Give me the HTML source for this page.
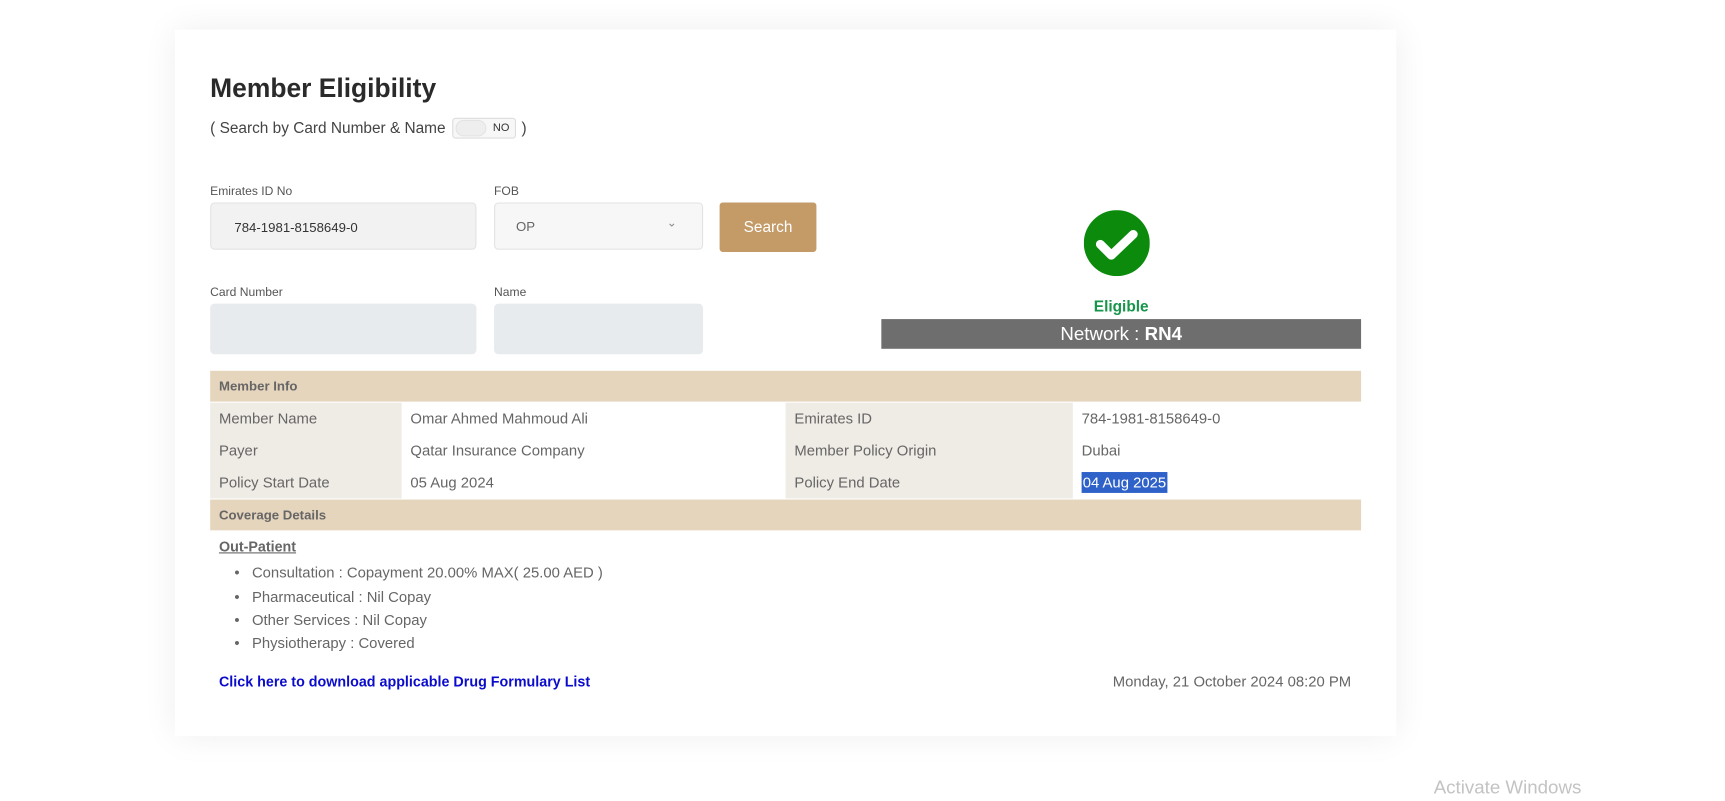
<!DOCTYPE html>
<html><head><meta charset="utf-8"><style>
html,body{margin:0;padding:0;width:1725px;height:801px;overflow:hidden;background:#fff;font-family:"Liberation Sans",Arial,sans-serif;}
#s{position:absolute;left:0;top:0;width:1560px;height:725px;transform:scale(1.1003);transform-origin:0 0;}
.a{position:absolute;white-space:nowrap}
.card{position:absolute;left:159px;top:27px;width:1110px;height:642px;background:#fff;box-shadow:0 0 30px rgba(0,0,0,0.07);}
.lbl{font-size:11px;color:#555}
.inp{position:absolute;height:43px;border:1px solid #e3e3e3;border-radius:4px;box-sizing:border-box}
.row{position:absolute;left:191px;width:1046px;height:29px;font-size:13.5px;color:#666}
.row div{position:absolute;top:0;height:29px;line-height:29px;padding-left:8px;box-sizing:border-box}
.g{background:#efebe5}
.hd{position:absolute;left:191px;width:1046px;height:28px;background:#e6d5bd;font-size:12px;font-weight:bold;color:#666;line-height:28px;padding-left:8px;box-sizing:border-box}
.li{font-size:13.5px;color:#666}
</style></head><body><div id="s">
<div class="card"></div>
<div class="a" style="left:191px;top:67px;font-size:24px;font-weight:bold;color:#2a2a2a">Member Eligibility</div>
<div class="a" style="left:191px;top:108px;font-size:14px;color:#444">( Search by Card Number &amp; Name</div>
<div class="a" style="left:411px;top:107px;width:58px;height:19px;border:1px solid #ddd;border-radius:3px;background:#f7f7f7;box-sizing:border-box"><div style="position:absolute;left:2px;top:1px;width:28px;height:15px;border-radius:8px;background:#eee;border:1px solid #e3e3e3;box-sizing:border-box"></div><div style="position:absolute;left:36px;top:3px;font-size:10px;color:#333">NO</div></div>
<div class="a" style="left:474px;top:108px;font-size:14px;color:#444">)</div>
<div class="a lbl" style="left:191px;top:168px">Emirates ID No</div>
<div class="a lbl" style="left:449px;top:168px">FOB</div>
<div class="inp" style="left:191px;top:184px;width:242px;background:#f2f2f2"><span class="a" style="left:21px;top:15px;font-size:12px;color:#333">784-1981-8158649-0</span></div>
<div class="inp" style="left:449px;top:184px;width:190px;background:#f7f7f7"><span class="a" style="left:19px;top:14px;font-size:12px;color:#666">OP</span><span class="a" style="left:156px;top:11px;font-size:11px;color:#888">&#8964;</span></div>
<div class="a" style="left:654px;top:184px;width:88px;height:45px;background:#c49a67;border-radius:3px;color:#fff;font-size:14px;text-align:center;line-height:45px">Search</div>
<div class="a lbl" style="left:191px;top:260px">Card Number</div>
<div class="a lbl" style="left:449px;top:260px">Name</div>
<div class="inp" style="left:191px;top:276px;width:242px;height:46px;background:#e8ebee;border-color:#e8ebee"></div>
<div class="inp" style="left:449px;top:276px;width:190px;height:46px;background:#e8ebee;border-color:#e8ebee"></div>
<svg class="a" style="left:985px;top:191px" width="60" height="60" viewBox="0 0 60 60"><circle cx="30" cy="30" r="30" fill="#0b8a0b"/><path d="M15 31 L25 41 L45 22" stroke="#fff" stroke-width="8" fill="none" stroke-linecap="round" stroke-linejoin="round"/></svg>
<div class="a" style="left:801px;width:436px;text-align:center;top:270px;font-size:14px;font-weight:bold;color:#17954a">Eligible</div>
<div class="a" style="left:801px;top:290px;width:436px;height:27px;background:#6e6e6e;color:#fff;font-size:17px;text-align:center;line-height:27px">Network : <b>RN4</b></div>
<div class="hd" style="top:337px">Member Info</div>
<div class="row" style="top:366px"><div class="g" style="left:0;width:174px">Member Name</div><div style="left:174px">Omar Ahmed Mahmoud Ali</div><div class="g" style="left:523px;width:261px">Emirates ID</div><div style="left:784px">784-1981-8158649-0</div></div>
<div class="row" style="top:395px"><div class="g" style="left:0;width:174px">Payer</div><div style="left:174px">Qatar Insurance Company</div><div class="g" style="left:523px;width:261px">Member Policy Origin</div><div style="left:784px">Dubai</div></div>
<div class="row" style="top:424px"><div class="g" style="left:0;width:174px">Policy Start Date</div><div style="left:174px">05 Aug 2024</div><div class="g" style="left:523px;width:261px">Policy End Date</div><div style="left:784px"><span style="background:#2f62c9;color:#fff;padding:2px 1px">04 Aug 2025</span></div></div>
<div class="hd" style="top:454px">Coverage Details</div>
<div class="a" style="left:199px;top:489px;font-size:13px;font-weight:bold;color:#666;text-decoration:underline">Out-Patient</div>
<div class="a li" style="left:213px;top:513px">•&nbsp;&nbsp;&nbsp;Consultation : Copayment 20.00% MAX( 25.00 AED )</div>
<div class="a li" style="left:213px;top:535px">•&nbsp;&nbsp;&nbsp;Pharmaceutical : Nil Copay</div>
<div class="a li" style="left:213px;top:556px">•&nbsp;&nbsp;&nbsp;Other Services : Nil Copay</div>
<div class="a li" style="left:213px;top:577px">•&nbsp;&nbsp;&nbsp;Physiotherapy : Covered</div>
<div class="a" style="left:199px;top:612px;font-size:13px;font-weight:bold;color:#0b0bcc">Click here to download applicable Drug Formulary List</div>
<div class="a" style="right:332px;top:612px;font-size:13.5px;color:#666">Monday, 21 October 2024 08:20 PM</div>
<div class="a" style="left:1303px;top:706px;font-size:17px;color:#c3c3c3">Activate Windows</div>
</div></body></html>
